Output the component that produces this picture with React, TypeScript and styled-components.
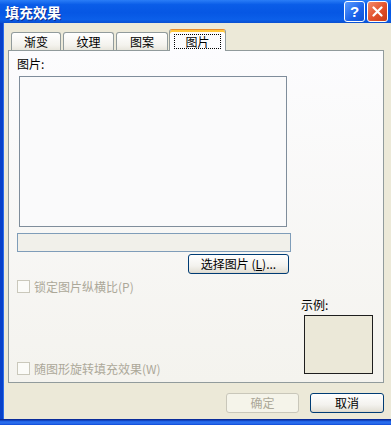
import styled, { createGlobalStyle } from "styled-components";

const GlobalStyle = createGlobalStyle`
  html, body {
    margin: 0;
    padding: 0;
    background: #ece9d8;
  }
  body {
    font-family: "Noto Sans CJK SC", "Noto Sans", sans-serif;
    font-size: 12px;
    color: #000;
  }
`;

const tabs = [
  { label: "渐变", width: 50 },
  { label: "纹理", width: 51 },
  { label: "图案", width: 52 },
  { label: "图片", width: 57, active: true },
];

export default function App() {
  return (
    <>
      <GlobalStyle />
      <win.wrap>
        <title.bar>
          <title.text>填充效果</title.text>
          <title.controls>
            <title.help>?</title.help>
            <title.close>
              <svg width="11" height="11" viewBox="0 0 11 11">
                <path d="M1.5 1.5 L9.5 9.5 M9.5 1.5 L1.5 9.5" stroke="#fff" strokeWidth="2.2" strokeLinecap="round" />
              </svg>
            </title.close>
          </title.controls>
        </title.bar>

        <win.body>
          <tab.row>
            {tabs.map((t) => (
              <tab.item key={t.label} $w={t.width} $active={!!t.active}>
                {t.active ? <tab.focus>{t.label}</tab.focus> : t.label}
              </tab.item>
            ))}
          </tab.row>

          <panel.wrap>
            <panel.label>图片:</panel.label>
            <panel.preview />
            <panel.path />
            <panel.buttonRow>
              <Button $w={101}>
                选择图片 (<u>L</u>)...
              </Button>
            </panel.buttonRow>
            <Check>锁定图片纵横比(P)</Check>

            <panel.bottom>
              <Check>随图形旋转填充效果(W)</Check>
              <sample.col>
                <sample.label>示例:</sample.label>
                <sample.box />
              </sample.col>
            </panel.bottom>
          </panel.wrap>

          <win.footer>
            <Button $w={73} disabled>
              确定
            </Button>
            <Button $w={74}>取消</Button>
          </win.footer>
        </win.body>
        <win.edge />
      </win.wrap>
    </>
  );
}

const Check = ({ children }: { children: React.ReactNode }) => (
  <check.row>
    <check.box />
    <check.text>{children}</check.text>
  </check.row>
);

const win = {
  wrap: styled.div`
    width: 391px;
    height: 425px;
    display: flex;
    flex-direction: column;
    overflow: hidden;
  `,
  body: styled.div`
    flex: 1;
    display: flex;
    flex-direction: column;
    padding: 6px 7px 0 5px;
    border-left: 3px solid #0841c9;
    box-shadow: inset 1px 0 0 #2a6cec;
  `,
  footer: styled.div`
    display: flex;
    justify-content: flex-end;
    gap: 11px;
    margin-top: 10px;
  `,
  edge: styled.div`
    height: 6px;
    flex-shrink: 0;
    background: linear-gradient(#0a2c9a 0, #0a2c9a 1px, #1d5fe4 2px, #2e72f0 4px, #0d4ad8 6px);
  `,
};

const title = {
  bar: styled.div`
    height: 23px;
    flex-shrink: 0;
    display: flex;
    align-items: center;
    padding: 0 3px 0 5px;
    background: linear-gradient(180deg, #2a7df7 0%, #0a5de8 20%, #0657e4 55%, #0b5fe9 85%, #0a4fd0 100%);
  `,
  text: styled.span`
    color: #fff;
    font-size: 14px;
    font-weight: bold;
    line-height: 16px;
    text-shadow: 1px 1px 0 #0b2b8f;
  `,
  controls: styled.div`
    margin-left: auto;
    display: flex;
    gap: 2px;
  `,
  help: styled.div`
    width: 19px;
    height: 19px;
    border: 1px solid #fff;
    border-radius: 3px;
    background: linear-gradient(135deg, #5a9bff, #1a62ea 60%, #0f52d4);
    color: #fff;
    font-family: "Liberation Sans", sans-serif;
    font-weight: bold;
    font-size: 15px;
    line-height: 19px;
    text-align: center;
  `,
  close: styled.div`
    width: 19px;
    height: 19px;
    border: 1px solid #fff;
    border-radius: 3px;
    background: linear-gradient(135deg, #f28a6a, #e2502a 55%, #c93d19);
    display: flex;
    align-items: center;
    justify-content: center;
  `,
};

const tab = {
  row: styled.div`
    height: 21px;
    display: flex;
    align-items: flex-end;
    gap: 2px;
    padding-left: 3px;
  `,
  item: styled.div<{ $w: number; $active: boolean }>`
    box-sizing: border-box;
    width: ${(p) => p.$w}px;
    height: ${(p) => (p.$active ? 22 : 18)}px;
    margin-bottom: ${(p) => (p.$active ? -1 : 0)}px;
    margin-left: ${(p) => (p.$active ? -1 : 0)}px;
    position: relative;
    z-index: ${(p) => (p.$active ? 1 : 0)};
    border: 1px solid #919b9c;
    border-bottom: none;
    border-radius: 3px 3px 0 0;
    border-top-color: ${(p) => (p.$active ? "#e68b2c" : "#919b9c")};
    box-shadow: ${(p) => (p.$active ? "inset 0 2px 0 #ffc73c" : "none")};
    background: ${(p) => (p.$active ? "#fcfcfe" : "linear-gradient(#ffffff, #f4f3ee 70%, #e8e6dc)")};
    display: flex;
    align-items: center;
    justify-content: center;
    padding-top: ${(p) => (p.$active ? 1 : 0)}px;
    font-size: 12px;
    line-height: 14px;
  `,
  focus: styled.span`
    border: 1px dotted #000;
    padding: 0 10px;
    line-height: 13px;
  `,
};

const panel = {
  wrap: styled.div`
    box-sizing: border-box;
    width: 376px;
    height: 333px;
    border: 1px solid #919b9c;
    background: linear-gradient(180deg, #fcfcfe, #f4f3ee);
    padding: 6px 10px 7px 8px;
    display: flex;
    flex-direction: column;
  `,
  label: styled.div`
    line-height: 14px;
    height: 14px;
  `,
  preview: styled.div`
    box-sizing: border-box;
    width: 268px;
    height: 151px;
    margin: 5px 0 0 2px;
    border: 1px solid #7f8d9b;
    background: #fafafb;
  `,
  path: styled.div`
    box-sizing: border-box;
    width: 274px;
    height: 19px;
    margin-top: 6px;
    border: 1px solid #7f9db9;
    background: #f1f0ea;
  `,
  buttonRow: styled.div`
    display: flex;
    padding-left: 171px;
    margin-top: 2px;
    margin-bottom: 6px;
  `,
  bottom: styled.div`
    margin-top: auto;
    display: flex;
    align-items: flex-end;
  `,
};

const sample = {
  col: styled.div`
    margin-left: auto;
    display: flex;
    flex-direction: column;
  `,
  label: styled.div`
    line-height: 14px;
    margin-bottom: 3px;
  `,
  box: styled.div`
    box-sizing: border-box;
    width: 69px;
    height: 59px;
    margin: 0 0 1px 3px;
    border: 1px solid #1e1e1e;
    background: #ebe8d8;
  `,
};

const check = {
  row: styled.div`
    display: flex;
    align-items: center;
    height: 13px;
  `,
  box: styled.div`
    box-sizing: border-box;
    width: 13px;
    height: 13px;
    border: 1px solid #cac8bb;
    background: #fbfbf8;
  `,
  text: styled.span`
    margin-left: 4px;
    color: #aca899;
    line-height: 13px;
  `,
};

const Button = styled.button<{ $w: number }>`
  box-sizing: border-box;
  width: ${(p) => p.$w}px;
  height: 20px;
  padding: 0;
  border: 1px solid #003c74;
  border-radius: 3px;
  background: linear-gradient(#ffffff, #f3f2ee 60%, #e3e0d6 95%, #d6d0c5);
  font-family: "Noto Sans CJK SC", "Noto Sans", sans-serif;
  font-size: 12px;
  line-height: 16px;
  color: #000;

  &:disabled {
    border-color: #c9c7ba;
    background: #f5f4ea;
    color: #aca899;
  }
`;
